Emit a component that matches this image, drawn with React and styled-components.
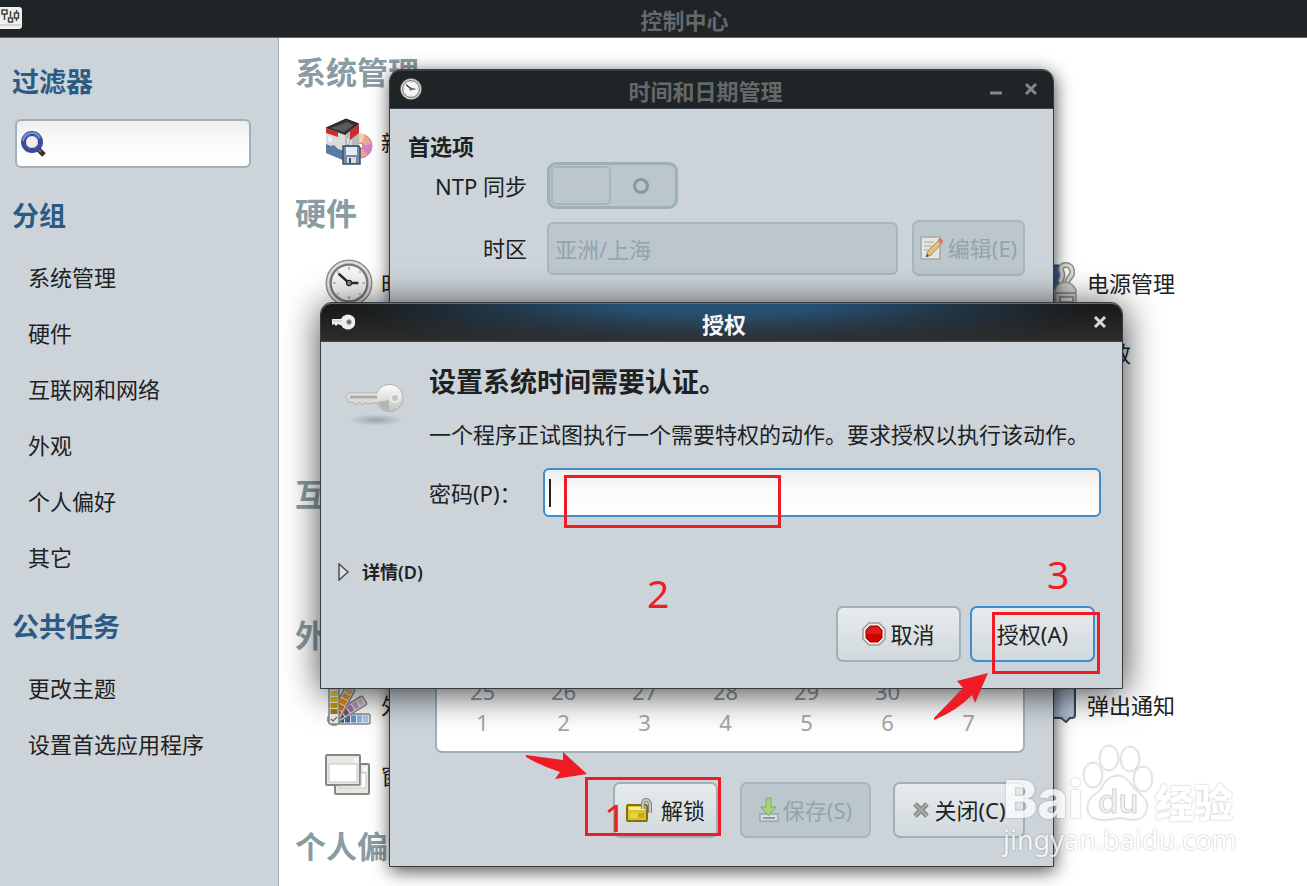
import styled, { createGlobalStyle, css } from "styled-components";

const colors = {
    panel: "#ccd4da",
    border: "#9fb1b8",
    dark: "#1f2427",
    text: "#1e2122",
    blue: "#2b5b85",
    heading: "#8a9ba3",
    disabled: "#93a4ac",
    disabledBg: "#bbc7cd",
    focus: "#3d8ccb",
    red: "#ee1c25",
};

const GlobalStyle = createGlobalStyle`
    *, *::before, *::after {
        box-sizing: border-box;
    }
    body {
        margin: 0;
        background: #fff;
        color: ${colors.text};
        font: 22px/32px "Noto Sans", "Noto Sans CJK SC", sans-serif;
    }
    button, input {
        font: inherit;
        color: inherit;
    }
    a {
        color: inherit;
        text-decoration: none;
    }
`;

const Desktop = styled.div`
    position: relative;
    display: flex;
    flex-direction: column;
    height: 100vh;
    overflow: hidden;
`;

const AppBar = styled.header`
    display: flex;
    align-items: center;
    gap: 40px;
    height: 38px;
    padding-bottom: 2px;
    flex-shrink: 0;
    background: ${colors.dark};
    border-bottom: 1px solid #5d6a70;
`;

const Title = styled.h1`
    flex: 1;
    margin: 0;
    padding-top: 4px;
    text-align: center;
    font-size: 22px;
    font-weight: 700;
    line-height: 32px;
    color: ${({ $active }) => ($active ? "#f4f6f7" : "#64696b")};
`;

const Columns = styled.div`
    display: flex;
    flex: 1;
    min-height: 0;
`;

const Sidebar = styled.aside`
    width: 279px;
    flex-shrink: 0;
    padding: 24px 27px 0 12px;
    background: ${colors.panel};
    border-right: 1px solid ${colors.border};
`;

const SideHeading = styled.h2`
    margin: ${({ $top }) => $top || 0}px 0 13px;
    font-size: 27px;
    line-height: 40px;
    font-weight: 700;
    color: ${colors.blue};
`;

const fieldStyle = css`
    height: 49px;
    border: 2px solid ${colors.border};
    border-radius: 6px;
    background: linear-gradient(#ededed, #fafafa 40%, #fff);
    outline: none;
`;

const SearchBox = styled.label`
    ${fieldStyle}
    display: flex;
    align-items: center;
    gap: 6px;
    margin: 17px 0 0 3px;
    padding-left: 3px;

    input {
        flex: 1;
        min-width: 0;
        border: 0;
        outline: none;
        background: none;
    }
`;

const SideLink = styled.a`
    display: block;
    padding-left: 16px;
    line-height: 56px;
`;

const Content = styled.main`
    flex: 1;
    min-width: 0;
    overflow: hidden;
    padding: 0 0 0 16px;
`;

const GroupHeading = styled.h2`
    margin: 0;
    padding-bottom: 2px;
    font-size: 31px;
    font-weight: 700;
    line-height: 69px;
    color: ${colors.heading};
`;

const Group = styled.div`
    display: grid;
    grid-template-columns: repeat(3, minmax(353px, 1fr));
    grid-template-rows: repeat(${({ $rows }) => $rows}, 70px);
    padding-left: 30px;
`;

const Launcher = styled.a`
    grid-column: ${({ $col }) => $col};
    grid-row: ${({ $row }) => $row};
    display: flex;
    align-items: center;
    gap: 8px;
    padding-bottom: 5px;
    white-space: nowrap;
`;

const Window = styled.section`
    position: absolute;
    left: ${({ $x }) => $x}px;
    top: ${({ $y }) => $y}px;
    width: ${({ $w }) => $w}px;
    background: ${colors.panel};
    border: 1px solid #353b3e;
    border-radius: 12px 12px 0 0;
    box-shadow: 1px 4px ${({ $active }) => ($active ? "36px rgba(0, 0, 0, 0.75)" : "18px rgba(0, 0, 0, 0.7)")};
`;

const TitleBar = styled.header`
    display: flex;
    align-items: center;
    height: 39px;
    padding: 0 15px 0 10px;
    border-radius: 11px 11px 0 0;
    border-bottom: 1px solid #40474a;
    background: ${({ $active }) =>
        $active
            ? "linear-gradient(transparent 20%, rgba(48, 48, 48, 0.85)), radial-gradient(ellipse 46% 170% at 50% 0, #265074 25%, #1b1b1a)"
            : colors.dark};
    box-shadow: ${({ $active }) => ($active ? "inset 0 1px #5c6f7c" : "inset 0 1px #3b4144")};
`;

const WindowButton = styled.button`
    display: flex;
    margin-left: ${({ $gap }) => $gap || 0}px;
    padding: 0;
    border: 0;
    background: none;
    color: ${({ $active }) => ($active ? "#d5d7d8" : "#84898b")};
`;

const PrefsBody = styled.div`
    padding: 21px 28px 28px 45px;
`;

const SectionTitle = styled.h3`
    margin: 0 0 0 -27px;
    font-size: 22px;
    line-height: 32px;
`;

const FormGrid = styled.div`
    display: grid;
    grid-template-columns: 92px 1fr;
    align-items: center;
    gap: 11px 20px;
`;

const FieldLabel = styled.label`
    text-align: right;
    white-space: nowrap;
`;

const Switch = styled.button`
    display: flex;
    align-items: center;
    width: 131px;
    height: 47px;
    padding: 1px;
    border: 3px solid ${colors.border};
    border-radius: 9px;
    background: ${colors.disabledBg};

    &::before {
        content: "";
        width: 60px;
        height: 39px;
        border: 2px solid #a5b6bd;
        border-radius: 5px;
    }
    &::after {
        content: "";
        width: 16px;
        height: 16px;
        margin-left: 22px;
        border: 3px solid #8799a1;
        border-radius: 50%;
    }
`;

const ZoneRow = styled.div`
    display: flex;
    align-items: center;
    gap: 14px;
`;

const ZoneInput = styled.input`
    flex: 1;
    min-width: 0;
    height: 53px;
    padding: 0 6px;
    border: 2px solid #a5b6bd;
    border-radius: 6px;
    background: ${colors.disabledBg};
    color: ${colors.disabled};
`;

const Button = styled.button`
    display: flex;
    align-items: center;
    justify-content: center;
    gap: ${({ $gap }) => $gap || 4}px;
    width: ${({ $w }) => $w}px;
    height: 56px;
    padding: 0;
    white-space: nowrap;
    border: 2px solid ${({ $focus }) => ($focus ? colors.focus : colors.border)};
    border-radius: 7px;
    background: linear-gradient(#e6ebed, #d1d9dc);

    &:disabled {
        border-color: #a5b6bd;
        background: ${colors.disabledBg};
        color: ${colors.disabled};
    }
`;

const Calendar = styled.div`
    display: flex;
    align-items: flex-end;
    min-height: 412px;
    margin-top: 65px;
    padding: 0 14px 13px 5px;
    border: 2px solid ${colors.border};
    border-radius: 7px;
    background: #fff;
`;

const Weeks = styled.table`
    width: 100%;
    table-layout: fixed;
    border-collapse: collapse;

    td {
        padding: 0;
        height: 31px;
        line-height: 31px;
        text-align: center;
    }
`;

const Week = styled.tr`
    color: ${({ $other }) => ($other ? "#a6a6a6" : "#8c9ba2")};
`;

const Actions = styled.div`
    display: flex;
    justify-content: flex-end;
    gap: ${({ $gap }) => $gap}px;
    margin-top: ${({ $top }) => $top}px;
`;

const AuthBody = styled.div`
    padding: 20px 27px 26px 17px;
`;

const AuthMain = styled.div`
    display: flex;
    align-items: flex-start;
    gap: 24px;
    margin: 0 -6px 0 7px;

    > svg {
        margin-top: 22px;
    }
`;

const AuthText = styled.div`
    flex: 1;
    min-width: 0;

    h3 {
        margin: 0;
        font-size: 27px;
        line-height: 40px;
    }
    p {
        margin: 15px 0 17px;
        line-height: 34px;
    }
`;

const PasswordRow = styled.div`
    display: flex;
    align-items: center;

    label {
        width: 114px;
    }
`;

const PasswordField = styled.div`
    position: relative;
    display: flex;
    flex: 1;
`;

const PasswordInput = styled.input`
    ${fieldStyle}
    width: 100%;
    padding: 0 6px;
    border-color: ${colors.focus};
`;

const Caret = styled.span`
    position: absolute;
    left: 6px;
    top: 11px;
    width: 2px;
    height: 28px;
    background: #222;
`;

const Expander = styled.button`
    display: flex;
    align-items: center;
    gap: 12px;
    margin-top: 40px;
    padding: 0;
    border: 0;
    background: none;
    font-size: 18px;
    font-weight: 600;
    line-height: 30px;
`;

const Mark = styled.div`
    position: absolute;
    left: ${({ $x }) => $x}px;
    top: ${({ $y }) => $y}px;
    color: ${colors.red};
    font-size: 39px;
    line-height: 40px;
    pointer-events: none;
`;

const MarkFrame = styled(Mark)`
    width: ${({ $w }) => $w}px;
    height: ${({ $h }) => $h}px;
    border: 3px solid ${colors.red};
`;

const Watermark = styled.div`
    position: absolute;
    left: 1003px;
    top: 744px;
    width: 240px;
    color: #fff;
    opacity: 0.75;
    filter: drop-shadow(0 0 1px rgba(0, 0, 0, 0.35));
    pointer-events: none;
`;

const Brand = styled.div`
    display: flex;
    align-items: flex-end;
    height: 78px;
`;

const BrandLatin = styled.b`
    width: 80px;
    font: 800 52px/44px Inter, sans-serif;
`;

const BrandHan = styled.b`
    font: 900 39px/44px "Noto Sans CJK SC", sans-serif;
`;

const Site = styled.div`
    font-size: 27px;
    line-height: 36px;
`;

const AppIcon = () => (
    <svg width="22" height="22" viewBox="0 0 22 22">
        <rect x="-3" y="0" width="25" height="22" rx="3" fill="#f0f0ee" />
        <path d="M0 18h21" stroke="#b8b8b5" />
        <g fill="none" stroke="#41413e" strokeWidth="1.5">
            <path d="M2 3h5v4h-5zM4.500 7v6M10.500 4v6M8.500 11h4v4h-4zM16.500 3v3M14.500 6h4v5h-4zM16.500 11v3" />
        </g>
    </svg>
);

const SearchIcon = () => (
    <svg width="28" height="28" viewBox="0 0 28 28">
        <path d="M18 19l6 6" stroke="#34302b" strokeWidth="5" />
        <path d="M18 19l3 3" stroke="#77736c" strokeWidth="2" />
        <circle cx="12" cy="12" r="9" fill="#eeeef0" stroke="#3d48a3" strokeWidth="4" />
        <path d="M3 11a9 9 0 0 1 17-3" fill="none" stroke="#6c9bdb" strokeWidth="2" />
        <circle cx="12" cy="12" r="6.500" fill="none" stroke="#242765" />
    </svg>
);

const ClockIcon = ({ size }) => (
    <svg width={size} height={size} viewBox="0 0 46 46">
        <circle cx="23" cy="23" r="22" fill="#b8b8b5" stroke="#82827e" />
        <circle cx="23" cy="23" r="20" fill="none" stroke="#e6e6e3" strokeWidth="1.500" />
        <circle cx="23" cy="23" r="17.500" fill="#f5f5f3" stroke="#777773" strokeWidth="2" />
        <path d="M23 8v2M23 36v2M8 23h2M36 23h2M12 12l1 1M34 12l-1 1M12 34l1-1M34 34l-1-1" stroke="#92928e" strokeWidth="1.500" />
        <path d="M13 14l10 9h9" fill="none" stroke="#292b2b" strokeWidth="2.500" />
        <circle cx="23" cy="23" r="2.500" fill="#888" stroke="#222" />
    </svg>
);

const PackageIcon = () => (
    <svg width="48" height="48" viewBox="0 0 48 48">
        <circle cx="35" cy="28" r="12" fill="#eaa49a" stroke="#cc7b7b" />
        <path d="M35 28l-5-11a12 12 0 0 1 10 0z" fill="#f5d3a0" />
        <path d="M35 28l12-2a12 12 0 0 1-4 11z" fill="#cf83c5" />
        <circle cx="35" cy="28" r="3" fill="#fff" stroke="#c66" />
        <path d="M1 10L21 1l13 5-14 11z" fill="#333" stroke="#1b1b1b" />
        <path d="M6 10l16-6 7 3-10 7z" fill="#595957" />
        <path d="M1 10l19 7v26L1 35z" fill="#dadcdc" />
        <path d="M20 17L34 6v25L20 43z" fill="#b7babb" />
        <path d="M1 10l12 4v5L1 15zM25 13L34 6v9L25 22z" fill="#c92e2d" />
        <path d="M1 26l5 2 3-1 4 4 7 2v10L1 35z" fill="#577ba2" />
        <path d="M4 18v6M6 19v5M23 20v6M26 22v5" stroke="#fff" />
        <path d="M18 28h16l1 2v16H18z" fill="#738da5" stroke="#38536c" strokeWidth="1.500" />
        <path d="M21 29h11v8H21z" fill="#e4edf3" />
        <path d="M22 39h9v6h-9z" fill="#d9dcdd" />
        <path d="M24 40h2v5h-2z" fill="#38536c" />
    </svg>
);

const BatteryIcon = () => (
    <svg width="48" height="48" viewBox="0 0 48 48">
        <path d="M4 6h24v24H4z" fill="#3f659b" stroke="#274775" />
        <path d="M29 23c2-4 3-6 2-9-2-5-1-8 4-8s7 5 6 9c-1 3-4 4-5 9" fill="none" stroke="#8f918e" strokeWidth="6" />
        <path d="M29 23c2-4 3-6 2-9-2-5-1-8 4-8s7 5 6 9c-1 3-4 4-5 9" fill="none" stroke="#deded9" strokeWidth="3" />
        <path d="M24 47V31q2-7 10-8 8 1 11 8v16z" fill="#d4d5d1" stroke="#999b97" strokeWidth="1.500" />
        <path d="M24 34h21M29 38h13v5H29z" fill="#eee" stroke="#999b97" strokeWidth="2" />
    </svg>
);

const swatches = [0, 1, 2, 3, 4];
const fans = [
    { angle: 0, fill: ["#eedb52", "#e4cc2c", "#e2c000", "#c59a08", "#a27b08"] },
    { angle: 28, fill: ["#edaf60", "#e99a3e", "#f28a1b", "#e06c0c", "#c55408"] },
    { angle: 58, fill: ["#d4b7d5", "#bc96be", "#a277a5", "#76507b", "#5c3566"] },
    { angle: 90, fill: ["#a6c6eb", "#8bb3e4", "#5f92cd", "#3968aa", "#204a87"] },
];

const PaletteIcon = () => (
    <svg width="48" height="48" viewBox="0 0 48 48">
        {[...fans].reverse().map(({ angle, fill }) => (
            <g key={angle} transform={`rotate(${angle} 9 38)`}>
                <rect x="4" y="2" width="10" height="41" rx="2" fill="#eeeeec" stroke="#888a85" strokeWidth="1.500" />
                {swatches.map((i) => (
                    <rect key={i} x="5.500" y={4 + i * 6} width="7" height="5" fill={fill[i]} />
                ))}
            </g>
        ))}
        <path d="M6 38l2 2 4-4" fill="none" stroke="#777" strokeWidth="1.500" />
    </svg>
);

const WindowsIcon = () => (
    <svg width="48" height="48" viewBox="0 0 48 48">
        <g fill="#e7e7e3" stroke="#858782" strokeWidth="2">
            <rect x="10" y="13" width="34" height="30" rx="1" />
            <rect x="1" y="4" width="34" height="30" rx="1" />
        </g>
        <path d="M4 13h28v18H4zM14 37h27V22h-5v13H14z" fill="#fff" stroke="#c5c6c1" />
        <path d="M29 7l4 4M33 7l-4 4M38 16l4 4M42 16l-4 4" stroke="#fff" strokeWidth="1.500" />
    </svg>
);

const NoticeIcon = () => (
    <svg width="48" height="48" viewBox="0 0 48 48">
        <path d="M2 7h40q2 0 2 2v25q0 3-3 3h-2l-4 4-5-4H2z" fill="#a9bfd9" stroke="#444b52" strokeWidth="2" />
        <path d="M20 9h22v26H20z" fill="#b9cce2" />
    </svg>
);

const KeyIcon = () => (
    <svg width="60" height="48" viewBox="0 0 60 48">
        <defs>
            <linearGradient id="metal" x2="0" y2="1">
                <stop stopColor="#fff" />
                <stop offset="1" stopColor="#c2c3bf" />
            </linearGradient>
            <radialGradient id="ground">
                <stop stopColor="#555f63" stopOpacity=".4" />
                <stop offset="1" stopColor="#555f63" stopOpacity="0" />
            </radialGradient>
        </defs>
        <ellipse cx="31" cy="36" rx="27" ry="6" fill="url(#ground)" />
        <path
            d="M1 13l3-4h28A13.500 13.500 0 1 1 32 19h-5l-3 1-4-1-3 2-3-3-3 3-4-3-3 1z"
            fill="url(#metal)"
            stroke="#b0b2ae"
        />
        <path d="M5 13h27" stroke="#aaaca7" strokeWidth="3" />
        <path d="M44 16v11a13 13 0 0 1-11-9z" fill="#b4b6b2" />
        <circle cx="50" cy="14" r="4" fill="#b9c8cd" stroke="#eee" strokeWidth="2" />
    </svg>
);

const SmallKeyIcon = () => (
    <svg width="24" height="18" viewBox="0 0 24 18">
        <path d="M1 6h9a7.500 7.500 0 1 1 0 6H9l-2-1-2 2-2-2-2 1z" fill="#eeefed" />
        <path d="M2 8h9" stroke="#b8b9b6" />
        <circle cx="18" cy="9" r="2.500" fill="#666" stroke="#b9bab7" />
    </svg>
);

const EditIcon = () => (
    <svg width="24" height="26" viewBox="0 0 24 26">
        <path d="M1 2h19v22H1z" fill="#e2e5e3" stroke="#a5a8a4" strokeWidth="1.500" />
        <path d="M4 7h10M4 11h8M4 15h5" stroke="#c2c6c4" strokeWidth="2" />
        <path d="M6 22l2-6L19 5l3 3-11 12z" fill="#e6c07c" stroke="#aa8a53" />
        <path d="M18 5l3 4 2-3-3-3z" fill="#d8787a" stroke="#d8787a" />
        <path d="M6 22l1-3 2 2z" fill="#444" />
    </svg>
);

const UnlockIcon = () => (
    <svg width="26" height="26" viewBox="0 0 26 26">
        <rect x="1" y="8" width="20" height="16" rx="1" fill="#d9c42c" stroke="#876f18" strokeWidth="2" />
        <path d="M3 10h16v3H3z" fill="#f4ee9a" />
        <path d="M4 16h14v5H4z" fill="#c4ae16" />
        <path d="M4 16h8v5H4z" fill="#e5d53d" />
        <path d="M17 12V7q0-4 3-4t4 4v9" fill="none" stroke="#83867f" strokeWidth="4" />
        <path d="M17 12V7q0-4 3-4t4 4v9" fill="none" stroke="#c3c5c0" strokeWidth="2" />
    </svg>
);

const SaveIcon = () => (
    <svg width="20" height="26" viewBox="0 0 20 26">
        <path d="M1 17h18v7H1z" fill="#dbe0e1" stroke="#9ca5a7" strokeWidth="1.500" />
        <path d="M4 21h12" stroke="#8d989b" strokeWidth="2" />
        <path d="M7 1h5v9h5l-7.500 9L2 10h5z" fill="#a5d37f" stroke="#78ad5c" />
    </svg>
);

const StopIcon = () => (
    <svg width="24" height="24" viewBox="0 0 24 24">
        <path d="M7 1h10l6 6v10l-6 6H7l-6-6V7z" fill="#f1f1ee" stroke="#9b9d98" strokeWidth="1.500" />
        <path d="M8 4h8l4 4v8l-4 4H8l-4-4V8z" fill="#cf0000" stroke="#a00" />
        <path d="M8 5h8l3 3v4H5V8z" fill="#e11b1b" />
    </svg>
);

const CloseGlyph = () => (
    <svg width="18" height="18" viewBox="0 0 18 18">
        <path d="M3 3l12 12M15 3L3 15" stroke="#7e817b" strokeWidth="5" />
        <path d="M3 3l12 12M15 3L3 15" stroke="#a5a8a1" strokeWidth="2.500" />
    </svg>
);

const CrossIcon = () => (
    <svg width="14" height="14" viewBox="0 0 14 14">
        <path d="M2 2l10 10M12 2L2 12" stroke="currentColor" strokeWidth="3" />
    </svg>
);

const MinimizeIcon = () => (
    <svg width="14" height="14" viewBox="0 0 14 14">
        <path d="M1 11h12" stroke="currentColor" strokeWidth="3" />
    </svg>
);

const ExpanderIcon = () => (
    <svg width="12" height="18" viewBox="0 0 12 18">
        <path d="M1 1v16l9-8z" fill="#dce1e4" stroke="#484e51" strokeWidth="1.500" />
    </svg>
);

const PawIcon = () => (
    <svg width="72" height="78" viewBox="0 0 72 78">
        <g fill="#fff" stroke="#d4d4d4">
            <ellipse cx="10" cy="31" rx="9" ry="12" />
            <ellipse cx="26" cy="14" rx="9" ry="12" />
            <ellipse cx="47" cy="15" rx="9" ry="12" />
            <ellipse cx="60" cy="35" rx="9" ry="12" />
            <path d="M35 32c9 0 12 9 18 15 7 6 13 11 10 20-3 10-15 9-23 7-8-1-16 3-25 1-9-1-12-9-9-17 3-7 9-8 13-14 4-7 8-12 16-12z" />
        </g>
        <text x="15" y="69" fontFamily="Inter, sans-serif" fontSize="33" fontWeight="500" fill="#eee" stroke="#c4c4c4">
            du
        </text>
    </svg>
);

const groups = ["系统管理", "硬件", "互联网和网络", "外观", "个人偏好", "其它"];
const tasks = ["更改主题", "设置首选应用程序"];

const sections = [
    { name: "系统管理", rows: 1, items: [{ name: "新立得软件包管理器", icon: PackageIcon, col: 1, row: 1 }] },
    {
        name: "硬件",
        rows: 3,
        items: [
            { name: "时间和日期管理", icon: ClockIcon, col: 1, row: 1 },
            { name: "电源管理", icon: BatteryIcon, col: 3, row: 1 },
            { name: "音效", icon: NoticeIcon, col: 3, row: 2 },
        ],
    },
    { name: "互联网和网络", rows: 1, items: [] },
    {
        name: "外观",
        rows: 2,
        items: [
            { name: "外观", icon: PaletteIcon, col: 1, row: 1 },
            { name: "弹出通知", icon: NoticeIcon, col: 3, row: 1 },
            { name: "窗口", icon: WindowsIcon, col: 1, row: 2 },
        ],
    },
    { name: "个人偏好", rows: 1, items: [] },
];

const ControlCenter = () => (
    <>
        <AppBar>
            <AppIcon />
            <Title>控制中心</Title>
        </AppBar>
        <Columns>
            <Sidebar>
                <SideHeading>过滤器</SideHeading>
                <SearchBox>
                    <SearchIcon />
                    <input type="text" aria-label="过滤器" />
                </SearchBox>
                <SideHeading $top={28}>分组</SideHeading>
                {groups.map((name) => (
                    <SideLink key={name} href="#">
                        {name}
                    </SideLink>
                ))}
                <SideHeading $top={22}>公共任务</SideHeading>
                {tasks.map((name) => (
                    <SideLink key={name} href="#">
                        {name}
                    </SideLink>
                ))}
            </Sidebar>
            <Content>
                {sections.map(({ name, rows, items }) => (
                    <section key={name}>
                        <GroupHeading>{name}</GroupHeading>
                        <Group $rows={rows}>
                            {items.map(({ name, icon: Icon, col, row }) => (
                                <Launcher key={name} href="#" $col={col} $row={row}>
                                    <Icon size={48} />
                                    {name}
                                </Launcher>
                            ))}
                        </Group>
                    </section>
                ))}
            </Content>
        </Columns>
    </>
);

const DateTimeWindow = () => (
    <Window $x={389} $y={69} $w={665}>
        <TitleBar>
            <ClockIcon size={22} />
            <Title as="h2">时间和日期管理</Title>
            <WindowButton aria-label="最小化">
                <MinimizeIcon />
            </WindowButton>
            <WindowButton aria-label="关闭" $gap={21}>
                <CrossIcon />
            </WindowButton>
        </TitleBar>
        <PrefsBody>
            <SectionTitle>首选项</SectionTitle>
            <FormGrid>
                <FieldLabel htmlFor="ntp">NTP 同步</FieldLabel>
                <Switch id="ntp" role="switch" aria-checked="false" disabled />
                <FieldLabel htmlFor="zone">时区</FieldLabel>
                <ZoneRow>
                    <ZoneInput id="zone" defaultValue="亚洲/上海" disabled />
                    <Button $w={113} disabled>
                        <EditIcon />
                        编辑(E)
                    </Button>
                </ZoneRow>
            </FormGrid>
            <Calendar>
                <Weeks>
                    <tbody>
                        <Week>
                            {[25, 26, 27, 28, 29, 30, 31].map((day) => (
                                <td key={day}>{day}</td>
                            ))}
                        </Week>
                        <Week $other>
                            {[1, 2, 3, 4, 5, 6, 7].map((day) => (
                                <td key={day}>{day}</td>
                            ))}
                        </Week>
                    </tbody>
                </Weeks>
            </Calendar>
            <Actions $gap={22} $top={29}>
                <Button $w={105} $gap={9}>
                    <UnlockIcon />
                    解锁
                </Button>
                <Button $w={131} disabled>
                    <SaveIcon />
                    保存(S)
                </Button>
                <Button $w={132}>
                    <CloseGlyph />
                    关闭(C)
                </Button>
            </Actions>
        </PrefsBody>
    </Window>
);

const AuthWindow = () => (
    <Window $x={320} $y={302} $w={803} $active>
        <TitleBar $active>
            <SmallKeyIcon />
            <Title as="h2" $active>
                授权
            </Title>
            <WindowButton aria-label="关闭" $active>
                <CrossIcon />
            </WindowButton>
        </TitleBar>
        <AuthBody>
            <AuthMain>
                <KeyIcon />
                <AuthText>
                    <h3>设置系统时间需要认证。</h3>
                    <p>一个程序正试图执行一个需要特权的动作。要求授权以执行该动作。</p>
                    <PasswordRow>
                        <label htmlFor="password">密码(P)：</label>
                        <PasswordField>
                            <PasswordInput id="password" type="password" />
                            <Caret />
                        </PasswordField>
                    </PasswordRow>
                </AuthText>
            </AuthMain>
            <Expander>
                <ExpanderIcon />
                详情(D)
            </Expander>
            <Actions $gap={9} $top={19}>
                <Button $w={125}>
                    <StopIcon />
                    取消
                </Button>
                <Button $w={125} $focus>
                    授权(A)
                </Button>
            </Actions>
        </AuthBody>
    </Window>
);

const Annotations = () => (
    <>
        <MarkFrame $x={564} $y={475} $w={217} $h={53} />
        <MarkFrame $x={992} $y={612} $w={108} $h={62} />
        <MarkFrame $x={585} $y={777} $w={136} $h={59} />
        <Mark $x={604} $y={797}>1</Mark>
        <Mark $x={647} $y={573}>2</Mark>
        <Mark $x={1047} $y={554}>3</Mark>
        <Mark as="svg" $x={526} $y={752} width="62" height="28" viewBox="0 0 62 28">
            <path d="M0 3l37 5V0l24 22-32 5 5-7Q15 14 0 5z" fill={colors.red} />
        </Mark>
        <Mark as="svg" $x={934} $y={673} width="54" height="48" viewBox="0 0 54 48">
            <path d="M0 45L29 15l-6-7L54 0 41 30l-3-8Q24 37 0 47z" fill={colors.red} />
        </Mark>
    </>
);

const App = () => (
    <Desktop>
        <GlobalStyle />
        <ControlCenter />
        <DateTimeWindow />
        <AuthWindow />
        <Annotations />
        <Watermark>
            <Brand>
                <BrandLatin>Bai</BrandLatin>
                <PawIcon />
                <BrandHan>经验</BrandHan>
            </Brand>
            <Site>jingyan.baidu.com</Site>
        </Watermark>
    </Desktop>
);

export default App;
